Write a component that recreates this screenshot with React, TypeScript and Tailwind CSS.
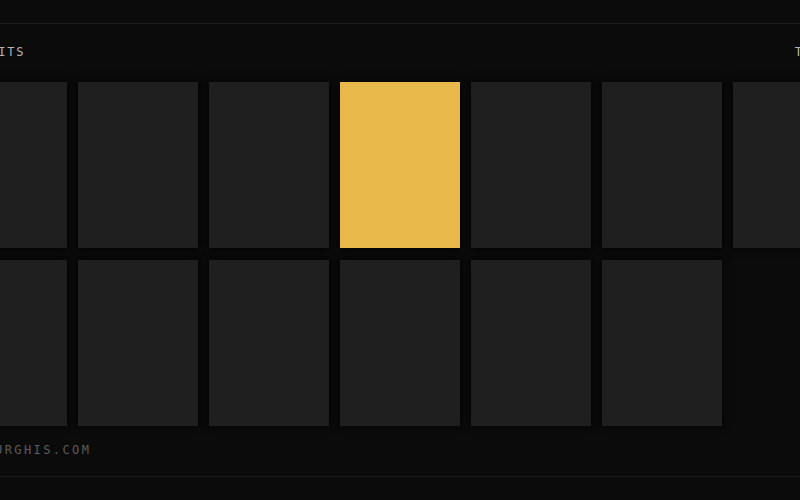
const cards = Array.from({ length: 13 }, (_, i) => i);
const active = 3;

export default function App() {
  return (
    <div className="h-[500px] w-full overflow-hidden bg-[#0b0b0b] pt-[23px] font-['DejaVu_Sans_Mono',monospace]">
      <div className="flex justify-center border-y border-[#1b1b1b]">
        <div className="w-[906px] shrink-0">
          {/* header */}
          <div className="flex justify-between pt-[20px] text-[12px] leading-4 tracking-[0.15em] text-[#b4b4b4]">
            <span className="-ml-[3px]">ALL UNITS</span>
            <span className="pr-[4px]">TOTALS</span>
          </div>

          {/* card grid */}
          <div className="mt-[22px] grid grid-cols-7 gap-x-[11px] gap-y-[12px]">
            {cards.map((i) => (
              <div
                key={i}
                className={
                  i === active
                    ? 'h-[166px] bg-[#e8b84b] shadow-[0_0_8px_rgba(0,0,0,0.9)]'
                    : 'h-[166px] bg-[#1f1f1f] shadow-[0_0_8px_rgba(0,0,0,0.9)]'
                }
              />
            ))}
          </div>

          {/* footer */}
          <div className="mt-[16px] pb-[18px] text-[12px] leading-4 tracking-[0.2em] text-[#5c5c5c]">
            WWW.BURGHIS.COM
          </div>
        </div>
      </div>
    </div>
  );
}
